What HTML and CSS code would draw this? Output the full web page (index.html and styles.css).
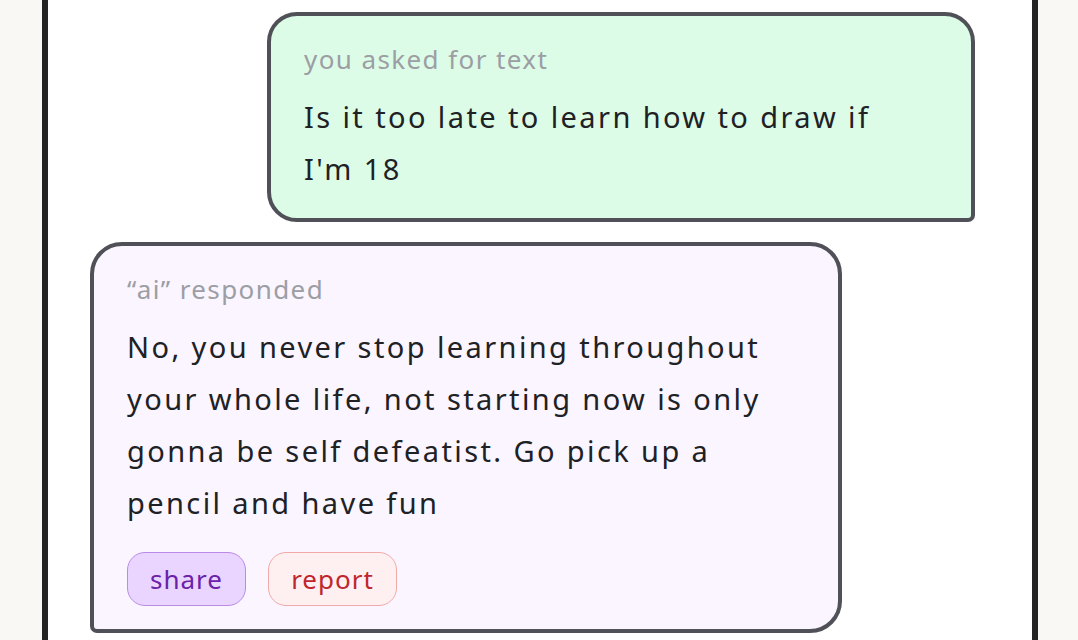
FILE: index.html
```html
<!DOCTYPE html>
<html lang="en">
<head>
<meta charset="utf-8">
<link rel="stylesheet" href="styles.css">
</head>
<body>
<div class="page">
  <main class="column">
    <div class="bubble bubble-user">
      <div class="label">you asked for text</div>
      <div class="body">Is it too late to learn how to draw if<br>I'm 18</div>
    </div>
    <div class="bubble bubble-ai">
      <div class="label">“ai” responded</div>
      <div class="body">No, you never stop learning throughout<br>your whole life, not starting now is only<br>gonna be self defeatist. Go pick up a<br>pencil and have fun</div>
      <div class="actions">
        <button class="btn btn-share">share</button>
        <button class="btn btn-report">report</button>
      </div>
    </div>
  </main>
</div>
</body>
</html>
```

FILE: styles.css
```css
html, body {
  margin: 0;
  padding: 0;
  background: #f9f8f5;
  font-family: "Noto Sans", "DejaVu Sans", sans-serif;
}

.page {
  height: 640px;
  padding-left: 42px;
  overflow: hidden;
}

.column {
  width: 984px;
  height: 640px;
  background: #ffffff;
  border-left: 6px solid #242424;
  border-right: 6px solid #242424;
  display: flex;
  flex-direction: column;
  padding-top: 12px;
  gap: 20px;
}

.bubble {
  box-sizing: border-box;
  border: 4px solid #505158;
  padding: 25px 33px 23px;
}

.bubble-user {
  width: 708px;
  margin-left: 219px;
  background: #dcfce7;
  border-radius: 30px 30px 7px 30px;
}

.bubble-ai {
  width: 752px;
  margin-left: 42px;
  background: #faf5ff;
  border-radius: 32px 32px 32px 7px;
}

.label {
  font-size: 26px;
  line-height: 36px;
  letter-spacing: 1.4px;
  color: #9c9ea4;
  margin-bottom: 14px;
  white-space: nowrap;
}

.body {
  font-size: 29px;
  line-height: 52px;
  letter-spacing: 2.4px;
  color: #202124;
  white-space: nowrap;
}

.actions {
  display: flex;
  gap: 22px;
  margin-top: 23px;
}

.btn {
  box-sizing: border-box;
  height: 54px;
  border-radius: 18px;
  font-family: inherit;
  font-size: 26px;
  letter-spacing: 1px;
  padding: 0;
  display: flex;
  align-items: center;
  justify-content: center;
}

.btn-share {
  width: 119px;
  background: #e9d5ff;
  border: 1.5px solid #b98be6;
  color: #6b21a8;
}

.btn-report {
  width: 129px;
  background: #fef0f0;
  border: 1.5px solid #f2a9a9;
  color: #c0262d;
}
```
